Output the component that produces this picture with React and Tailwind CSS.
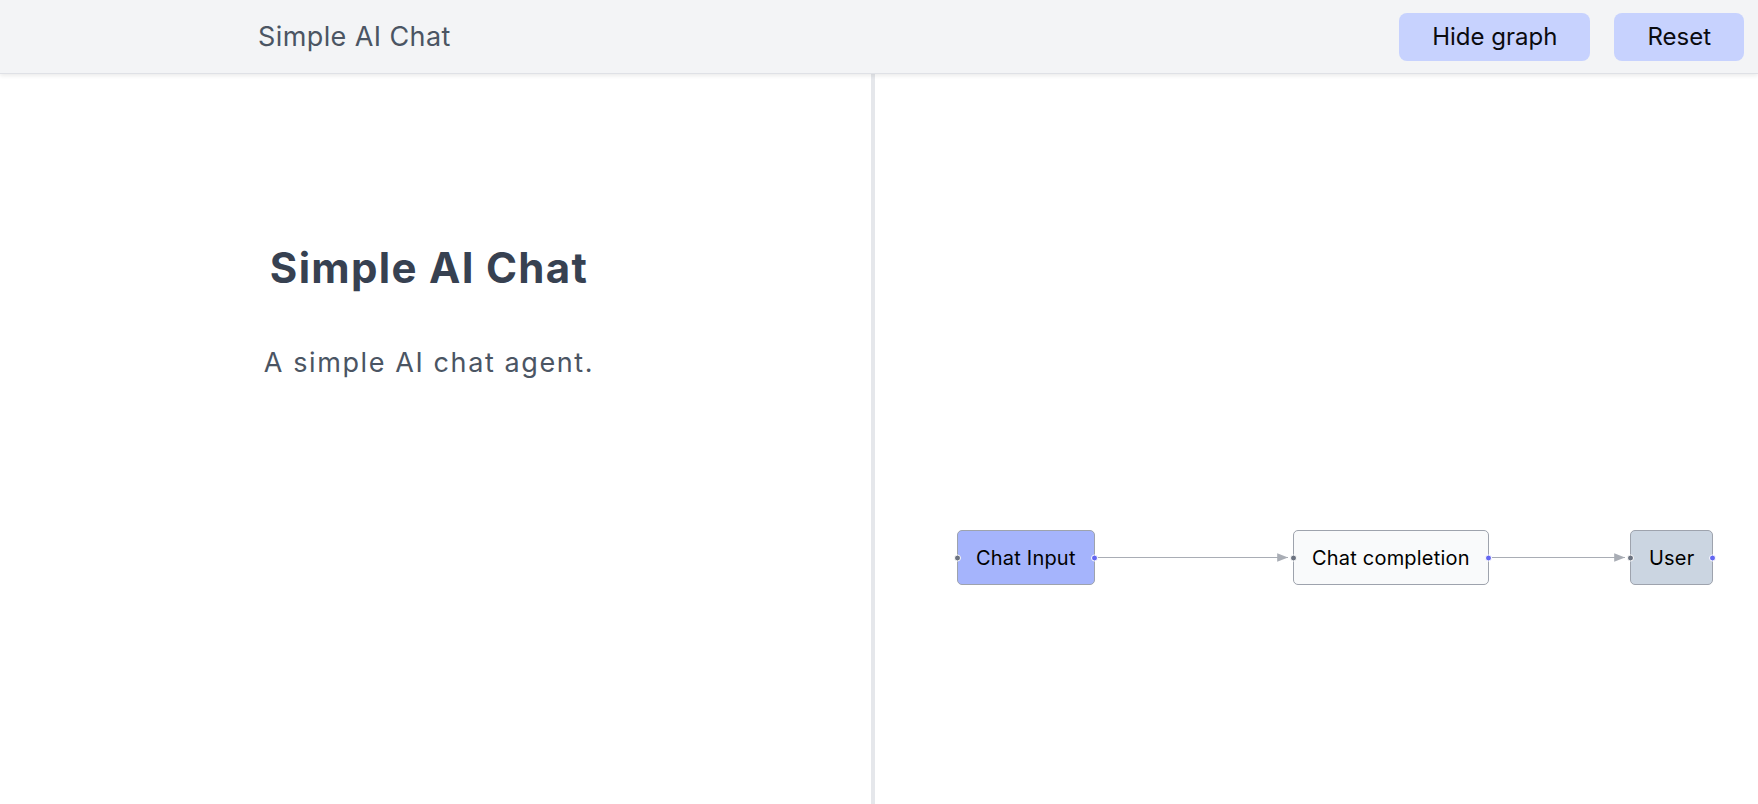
import React from "react";

function Node({ left, label, className }) {
  return (
    <div
      className={`absolute top-[456px] h-[55px] rounded-[5px] border border-[#9ea3ad] px-[18px] flex items-center text-[20px] leading-[28px] tracking-[0.2px] text-black ${className}`}
      style={{ left }}
    >
      {label}
      <span className="absolute left-[-4px] top-1/2 -translate-y-1/2 w-[7px] h-[7px] rounded-full bg-[#6b7280] border border-white" />
      <span className="absolute right-[-4px] top-1/2 -translate-y-1/2 w-[7px] h-[7px] rounded-full bg-[#6366f1] border border-white" />
    </div>
  );
}

export default function App() {
  return (
    <div className="w-[1758px] h-[804px] flex flex-col bg-white overflow-hidden" style={{ fontFamily: "Inter, 'Noto Sans', sans-serif" }}>
      <header className="relative z-10 h-[74px] shrink-0 bg-[#f3f4f6] border-b border-[#dfe1e6] shadow-[0_2px_4px_rgba(0,0,0,0.08)] flex items-center pl-[258px] pr-[14px]">
        <div className="text-[27px] tracking-[0.4px] text-[#4b5563] pt-[2px]">Simple AI Chat</div>
        <div className="ml-auto flex items-center gap-[24px]">
          <button className="h-[48px] px-[33px] rounded-lg bg-[#c7d2fe] text-[24px] text-[#0b0b0f]">Hide graph</button>
          <button className="h-[48px] px-[33px] rounded-lg bg-[#c7d2fe] text-[24px] text-[#0b0b0f]">Reset</button>
        </div>
      </header>
      <div className="flex-1 flex min-h-0">
        <div className="w-[871px] shrink-0 flex flex-col items-center pt-[169px] pr-[13px]">
          <h1 className="text-[42px] leading-[50px] font-bold tracking-[1.3px] text-[#374151]">Simple AI Chat</h1>
          <p className="mt-[50px] text-[27px] leading-[40px] tracking-[1.6px] text-[#4b5563]">A simple AI chat agent.</p>
        </div>
        <div className="w-[4px] shrink-0 bg-[#e5e7eb]" />
        <div className="relative flex-1">
          <svg className="absolute inset-0 w-full h-full" width="883" height="730">
            <defs>
              <marker id="arr" viewBox="0 0 10 10" refX="10" refY="5" markerWidth="9" markerHeight="9" orient="auto">
                <path d="M0,1 L10,5 L0,9 z" fill="#a9adb5" />
              </marker>
            </defs>
            <line x1="222" y1="483.5" x2="413" y2="483.5" stroke="#a9adb5" strokeWidth="1.2" markerEnd="url(#arr)" />
            <line x1="617" y1="483.5" x2="750" y2="483.5" stroke="#a9adb5" strokeWidth="1.2" markerEnd="url(#arr)" />
          </svg>
          <Node left={82} label="Chat Input" className="bg-[#a5b4fc]" />
          <Node left={418} label="Chat completion" className="bg-[#f9fafb]" />
          <Node left={755} label="User" className="bg-[#cbd5e1]" />
        </div>
      </div>
    </div>
  );
}
